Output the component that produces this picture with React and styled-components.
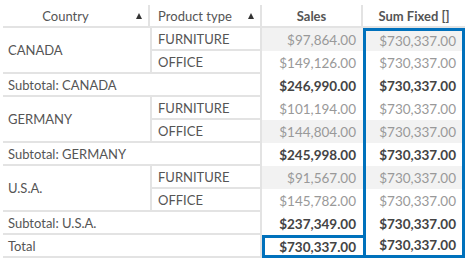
import React from "react";
import styled, { createGlobalStyle, css } from "styled-components";

const GlobalStyle = createGlobalStyle`
  body {
    margin: 0;
    background: #fff;
    font-family: Lato, "Open Sans", sans-serif;
  }
`;

const line = "#e3e3e3";
const blue = "#0071bc";

const Grid = styled.div`
  display: grid;
  grid-template-columns: 147px 112px 101px 102px;
  grid-template-rows: 23px;
  grid-auto-rows: 23px;
  margin: 5px 0 0 3px;
  width: 462px;
  font-size: 13px;
`;

const Head = styled.div`
  box-sizing: border-box;
  display: flex;
  align-items: center;
  justify-content: center;
  position: relative;
  color: #555;
  font-weight: ${(p) => (p.$bold ? 700 : 400)};
  border-bottom: 2px solid ${line};
  border-right: ${(p) => (p.$last ? "none" : `2px solid ${line}`)};
  padding-right: ${(p) => (p.$sort ? "20px" : "0")};
`;

const SortArrow = styled.span`
  position: absolute;
  right: 6px;
  top: 8px;
  width: 0;
  height: 0;
  border-left: 3.5px solid transparent;
  border-right: 3.5px solid transparent;
  border-bottom: 6px solid #333;
`;

const Label = styled.div`
  box-sizing: border-box;
  display: flex;
  align-items: center;
  padding-left: ${(p) => (p.$product ? "6px" : "5px")};
  color: #555;
  border-bottom: 2px solid ${line};
  border-left: ${(p) => (p.$product ? `2px solid ${line}` : "none")};
  border-right: ${(p) => (p.$edge ? `2px solid ${line}` : "none")};
  grid-row: ${(p) => (p.$span ? "span 2" : "auto")};
  grid-column: ${(p) => (p.$wide ? "span 2" : "auto")};
`;

const Value = styled.div`
  box-sizing: border-box;
  display: flex;
  align-items: center;
  justify-content: flex-end;
  padding-right: 7px;
  font-size: 13.5px;
  color: ${(p) => (p.$bold ? "#444" : "#999")};
  font-weight: ${(p) => (p.$bold ? 700 : 400)};
  background: ${(p) => (p.$striped ? "#f2f2f2" : "#fff")};
  ${(p) =>
    p.$fixed &&
    css`
      border-left: 3px solid ${blue};
      border-right: 3px solid ${blue};
      padding-right: 6px;
    `}
  ${(p) => p.$first && css`border-top: 3px solid ${blue};`}
  ${(p) => p.$last && css`border-bottom: 3px solid ${blue};`}
  ${(p) =>
    p.$boxed &&
    css`
      border: 3px solid ${blue};
      border-right: none;
      padding-right: 7px;
    `}
`;

const groups = [
  {
    country: "CANADA",
    rows: [
      { type: "FURNITURE", sales: "$97,864.00", striped: true },
      { type: "OFFICE", sales: "$149,126.00", striped: false },
    ],
    subtotal: "$246,990.00",
  },
  {
    country: "GERMANY",
    rows: [
      { type: "FURNITURE", sales: "$101,194.00", striped: false },
      { type: "OFFICE", sales: "$144,804.00", striped: true },
    ],
    subtotal: "$245,998.00",
  },
  {
    country: "U.S.A.",
    rows: [
      { type: "FURNITURE", sales: "$91,567.00", striped: true },
      { type: "OFFICE", sales: "$145,782.00", striped: false },
    ],
    subtotal: "$237,349.00",
  },
];

const FIXED = "$730,337.00";

export default function App() {
  return (
    <>
      <GlobalStyle />
      <Grid>
        <Head $sort>
          Country
          <SortArrow />
        </Head>
        <Head $sort>
          Product type
          <SortArrow />
        </Head>
        <Head $bold>Sales</Head>
        <Head $bold $last>
          Sum Fixed []
        </Head>

        {groups.map((g, gi) => (
          <React.Fragment key={g.country}>
            {g.rows.map((r, ri) => (
              <React.Fragment key={r.type}>
                {ri === 0 && <Label $span>{g.country}</Label>}
                <Label $product $edge>
                  {r.type}
                </Label>
                <Value $striped={r.striped}>{r.sales}</Value>
                <Value $striped={r.striped} $fixed $first={gi === 0 && ri === 0}>
                  {FIXED}
                </Value>
              </React.Fragment>
            ))}
            <Label $wide $edge>
              Subtotal: {g.country}
            </Label>
            <Value $bold>{g.subtotal}</Value>
            <Value $bold $fixed>
              {FIXED}
            </Value>
          </React.Fragment>
        ))}

        <Label $wide $edge>
          Total
        </Label>
        <Value $bold $boxed>
          {FIXED}
        </Value>
        <Value $bold $fixed $last>
          {FIXED}
        </Value>
      </Grid>
    </>
  );
}
